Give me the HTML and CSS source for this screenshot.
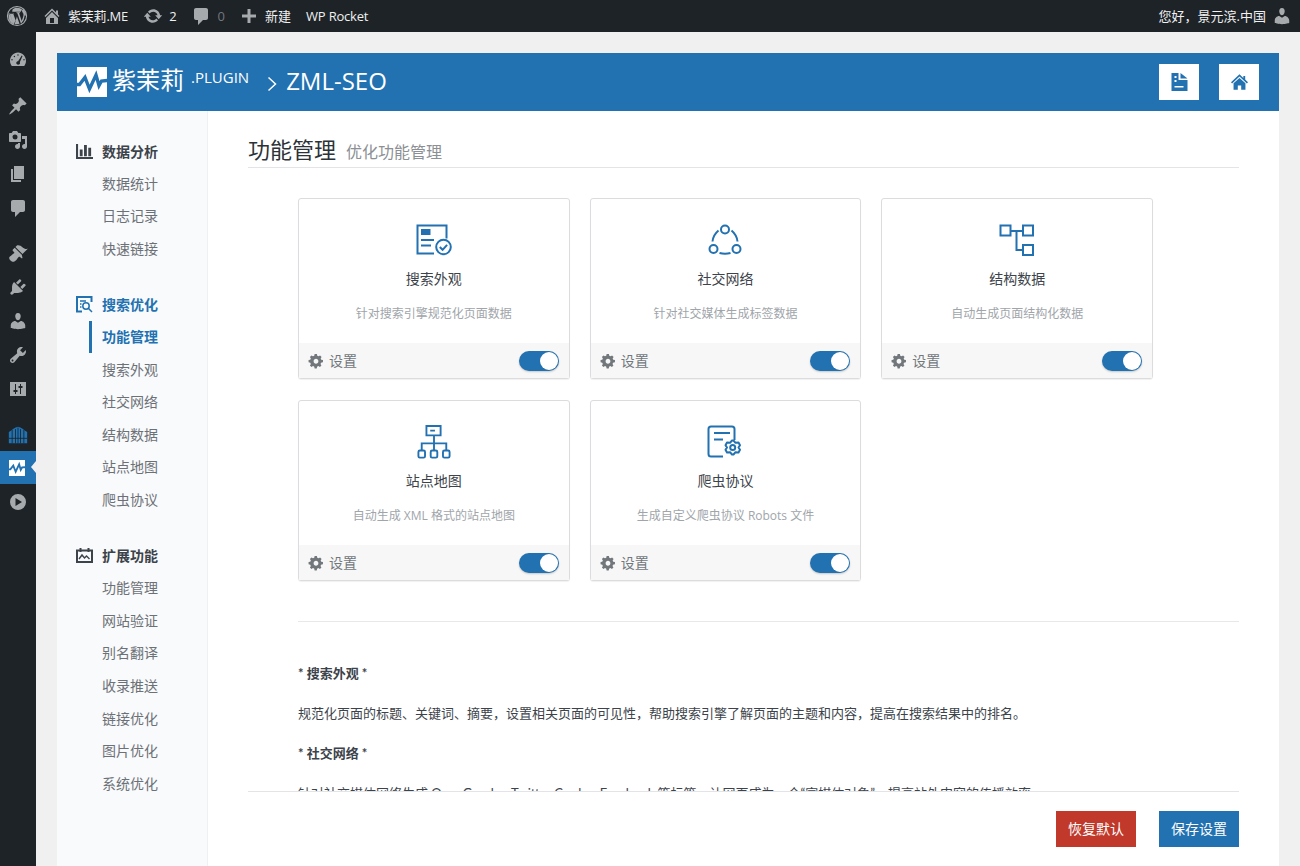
FILE: index.html
```html
<!DOCTYPE html>
<html lang="zh-CN">
<head>
<meta charset="utf-8">
<title>ZML-SEO</title>
<link rel="stylesheet" href="styles.css">
</head>
<body>
<svg class="defs" width="0" height="0" aria-hidden="true">
  <symbol id="i-gear" viewBox="0 0 20 20"><path fill-rule="evenodd" d="M18.500 11.700l-2.200.5c-.2.6-.4 1.100-.7 1.600l1.200 1.900-1.900 1.900-1.900-1.200c-.5.300-1 .5-1.600.7l-.5 2.200H8.300l-.5-2.200c-.6-.2-1.100-.4-1.600-.7l-1.900 1.200-1.900-1.900 1.200-1.900c-.3-.5-.5-1-.7-1.600l-2.200-.5V8.900l2.200-.5c.2-.6.4-1.100.7-1.600L2.400 4.900l1.900-1.900 1.900 1.200c.5-.3 1-.5 1.600-.7l.5-2.200h2.800l.5 2.200c.6.200 1.100.4 1.600.7l1.900-1.200 1.900 1.900-1.200 1.900c.3.500.5 1 .7 1.600l2.200.5v2.800zM10 13.300c1.700 0 3-1.300 3-3s-1.300-3-3-3-3 1.300-3 3 1.300 3 3 3z"/></symbol>
  <symbol id="i-comment" viewBox="0 0 20 20"><path d="M5 2h10c1.100 0 2 .9 2 2v8c0 1.100-.9 2-2 2h-3l-5 5v-5H5c-1.100 0-2-.9-2-2V4c0-1.100.9-2 2-2z"/></symbol>
  <symbol id="i-pulse" viewBox="0 0 30 30"><path fill="#fff" d="M0 0h30v30H0z"/><path fill="none" stroke="#2271b1" stroke-width="3.400" d="M-1 17.500h3.500L8 10.500l4.500 11.500L19 8l3 10.500 2.500-4.500 6-.5"/></symbol>
</svg>

<header class="adminbar">
  <svg class="ab-wp" viewBox="0 0 20 20"><path fill-rule="evenodd" d="M10 .8a9.200 9.200 0 1 1 0 18.400A9.200 9.200 0 0 1 10 .8zm0 1a8.200 8.200 0 1 0 0 16.400A8.200 8.200 0 0 0 10 1.800zM3 7.100l3.900 10.500C4.100 16.300 2.300 13.400 2.300 10c0-1 .2-2 .7-2.900zm13.900 2.500c0 1.300-.5 2.800-1 4.200l-2.300 3.300-2.400-7-.9-2.700-.8-.1v-.7h3.300v.7l-.9.1 2.400 7.200 1.200-3.800c.3-.9.400-1.500.4-2 0-.8-.3-1.400-.6-1.800-.4-.6-.7-1-.7-1.600 0-.7.500-1.300 1.200-1.300 1.300 1.500 2.100 3.500 2.100 5.700zM9.900 10.500l2.400 6.600c-.7.3-1.500.4-2.300.4-.7 0-1.400-.1-2.100-.3zM10 2.500c2 0 3.700.7 5.100 2-.9 0-1.600.8-1.600 1.700H5.900L5 6h.9l2.800 7.900-1.700 4-3.200-9.100-.8-.1v-.7h3.300l.8.1C4 4.400 6.800 2.500 10 2.500z"/></svg>
  <svg class="ab-home" viewBox="0 0 20 20"><path fill-rule="evenodd" d="M16 8.500l1.530 1.530-1.060 1.060L10 4.620l-6.470 6.470-1.060-1.060L10 2.500l4 4v-2h2v4zm-6-2.460l6 5.990V18H4v-5.970zM12 17v-5H8v5h4z"/></svg>
  <span class="ab-text ab-site">紫茉莉.ME</span>
  <svg class="ab-update" viewBox="0 0 20 20"><path d="M10.200 3.280c3.530 0 6.430 2.610 6.920 6h2.080l-3.500 4-3.500-4h2.320c-.45-1.970-2.210-3.440-4.320-3.440-1.450 0-2.730.71-3.540 1.780L4.950 5.660C6.230 4.200 8.110 3.280 10.200 3.280zm-.4 13.440c-3.520 0-6.430-2.610-6.920-6H.8l3.500-4c1.170 1.330 2.330 2.670 3.500 4H5.480c.45 1.970 2.210 3.440 4.320 3.440 1.450 0 2.730-.71 3.540-1.780l1.710 1.950c-1.280 1.460-3.150 2.390-5.250 2.390z"/></svg>
  <span class="ab-text ab-count">2</span>
  <svg class="ab-comment"><use href="#i-comment"/></svg>
  <span class="ab-text ab-zero">0</span>
  <svg class="ab-plus" viewBox="0 0 20 20"><path d="M17 8.500v3h-5.500V17h-3v-5.500H3v-3h5.500V3h3v5.500z"/></svg>
  <span class="ab-text ab-new">新建</span>
  <span class="ab-text ab-rocket">WP Rocket</span>
  <span class="ab-text ab-hello">您好，景元滨.中国</span>
  <svg class="ab-user" viewBox="0 0 20 20"><path d="M10 9.250c-2.270 0-2.730-3.440-2.730-3.440C7 4.020 7.820 2 9.970 2c2.160 0 2.980 2.020 2.710 3.810 0 0-.41 3.440-2.680 3.440zm0 2.570L12.720 10c2.390 0 4.520 2.330 4.520 4.530v2.490s-3.650 1.130-7.240 1.130c-3.650 0-7.240-1.130-7.240-1.130v-2.490c0-2.250 1.940-4.480 4.470-4.480z"/></svg>
</header>

<div class="shell">
  <nav class="wpmenu">
    <div class="mi"><svg viewBox="0 0 20 20"><path fill-rule="evenodd" d="M3.760 16h12.480c1.100-1.430 1.760-3.210 1.760-5.140 0-4.640-3.580-8.410-8-8.410s-8 3.770-8 8.410c0 1.930.66 3.710 1.760 5.140zM10 4.260a.72.72 0 1 1 0 1.450.72.72 0 0 1 0-1.450zM6.400 5.700a.72.72 0 1 1 0 1.450.72.72 0 0 1 0-1.450zM4 9a.72.72 0 1 1 0 1.450A.72.72 0 0 1 4 9zm12 0a.72.72 0 1 1 0 1.450A.72.72 0 0 1 16 9zM13.700 5.500l.8.5-2.700 6.300c.4.700.3 1.500-.3 2-.8.700-2.200.6-2.800-.2-.7-.8-.5-2 .4-2.600.3-.2.600-.3 1-.3z"/></svg></div>
    <div class="mi mi-gap"><svg viewBox="0 0 20 20"><path d="M10.440 3.020l1.820-1.820 6.360 6.350-1.830 1.820c-1.050-.68-2.480-.57-3.410.36l-.75.75c-.92.93-1.040 2.350-.35 3.410l-1.830 1.820-2.410-2.410-2.800 2.790c-.42.42-3.380 2.710-3.800 2.290s1.860-3.390 2.280-3.810l2.790-2.790L4.100 9.360l1.830-1.820c1.050.69 2.480.57 3.400-.36l.75-.75c.93-.92 1.050-2.350.36-3.410z"/></svg></div>
    <div class="mi"><svg viewBox="0 0 20 20"><path fill-rule="evenodd" d="M13 11V4c0-.55-.45-1-1-1h-1.670L9 1H5L3.670 3H2c-.55 0-1 .45-1 1v7c0 .55.45 1 1 1h10c.55 0 1-.45 1-1zM7 4.500a2.500 2.500 0 1 1 0 5 2.500 2.500 0 0 1 0-5zM14 6h5v10.500c0 1.380-1.120 2.500-2.500 2.500S14 17.880 14 16.500s1.120-2.500 2.500-2.500c.17 0 .34.020.5.050V9h-3V6zm-4 8.050V13h2v3.500c0 1.380-1.120 2.500-2.500 2.500S7 17.880 7 16.500 8.120 14 9.500 14c.17 0 .34.020.5.050z"/></svg></div>
    <div class="mi"><svg viewBox="0 0 20 20"><path d="M6 15V2h10v13H6zm-1 1h8v2H3V5h2v11z"/></svg></div>
    <div class="mi"><svg><use href="#i-comment"/></svg></div>
    <div class="mi mi-gap2"><svg viewBox="0 0 20 20"><path d="M14.480 11.060L7.410 3.990l1.500-1.500c.5-.56 2.300-.47 3.510.32 1.210.8 1.430 1.280 2.910 2.100 1.180.64 2.450 1.260 4.450.85zm-.71.71L6.700 4.700 4.930 6.470c-.39.39-.39 1.020 0 1.410l1.060 1.060c.39.39.39 1.030 0 1.420-.6.6-1.430 1.110-2.210 1.690-.35.26-.7.53-1.010.84C1.430 13.230.18 15.180 2.490 17.500s4.270 1.070 5.610-.26c.31-.31.58-.66.84-1.010.58-.78 1.090-1.610 1.690-2.210.39-.39 1.020-.39 1.410 0l1.060 1.060c.39.39 1.020.39 1.410 0z"/></svg></div>
    <div class="mi"><svg viewBox="0 0 20 20"><path d="M13.110 4.360L9.870 7.600 8 5.730l3.240-3.240c.35-.34 1.050-.2 1.560.32.52.51.66 1.210.31 1.550zm-8 1.770l.91-1.120 9.010 9.010-1.190.84c-.71.71-2.630 1.160-3.820 1.160H6.140L4.900 17.260c-.59.59-1.540.59-2.120 0-.59-.58-.59-1.530 0-2.120l1.240-1.240v-3.880c0-1.130.4-3.190 1.090-3.890zm7.260 3.970l3.240-3.240c.34-.35 1.040-.21 1.550.31.52.51.66 1.210.31 1.550l-3.240 3.250z"/></svg></div>
    <div class="mi"><svg viewBox="0 0 20 20"><path d="M10 9.250c-2.270 0-2.730-3.440-2.730-3.440C7 4.020 7.820 2 9.970 2c2.160 0 2.980 2.020 2.710 3.810 0 0-.41 3.440-2.680 3.440zm0 2.570L12.720 10c2.390 0 4.520 2.330 4.520 4.530v2.490s-3.650 1.130-7.240 1.130c-3.650 0-7.240-1.130-7.240-1.130v-2.490c0-2.250 1.940-4.480 4.470-4.480z"/></svg></div>
    <div class="mi"><svg viewBox="0 0 20 20"><path d="M16.680 9.770c-1.340 1.340-3.300 1.670-4.950.99l-5.410 6.520c-.99.99-2.590.99-3.580 0s-.99-2.590 0-3.570l6.520-5.420c-.68-1.650-.35-3.610.99-4.950 1.280-1.280 3.120-1.620 4.720-1.060l-2.890 2.890 2.820 2.820 2.860-2.870c.53 1.580.18 3.390-1.080 4.650zM3.810 16.210c.4.39 1.040.39 1.430 0 .4-.4.4-1.040 0-1.430-.39-.4-1.030-.4-1.430 0-.39.39-.39 1.030 0 1.430z"/></svg></div>
    <div class="mi"><svg viewBox="0 0 20 20"><path fill-rule="evenodd" d="M2 3h16v14H2zM7 5v6H5.500v2H7v2h1v-2h1.500v-2H8V5zm5 0v2h-1.500v2H12v6h1V9h1.500V7H13V5z"/></svg></div>
    <div class="mi mi-gap mi-brand"><svg viewBox="0 0 24 20"><path d="M1 6.500C5 3.500 8 1 12 0c4 1 7 3.500 11 6.500V20H1z"/><path class="brand-lines" d="M5 4v16M9 3v17M12 1v19M15 3v17M19 4v16M1 14h22"/></svg></div>
    <div class="mi-active"><svg><use href="#i-pulse"/></svg></div>
    <div class="mi mi-last"><svg viewBox="0 0 20 20"><path fill-rule="evenodd" d="M10 2a8 8 0 1 1 0 16 8 8 0 0 1 0-16zM7.500 6v8l6.500-4z"/></svg></div>
  </nav>

  <div class="content">
    <section class="panel">
      <div class="hero">
        <svg class="hero-logo"><use href="#i-pulse"/></svg>
        <span class="hero-name">紫茉莉</span>
        <span class="hero-plugin">.PLUGIN</span>
        <svg class="hero-chev" viewBox="0 0 10 16"><path d="M1.500 1.500L8.500 8l-7 6.500"/></svg>
        <span class="hero-title">ZML-SEO</span>
        <div class="hero-actions">
          <div class="hero-btn"><svg viewBox="0 0 16 18"><path fill-rule="evenodd" d="M0 0h7v7h9v11H0zM3 3v2h2V3zm0 4v2h2V7zM3 13v1.500h9V13zM9 0l7 5.500H9z"/></svg></div>
          <div class="hero-btn"><svg viewBox="0 0 20 18"><path d="M10 0l4.500 4.200V1.800h2.200v4.400L20 9.300l-1.300 1.400L10 2.600 1.300 10.700 0 9.300z"/><path d="M10 4.200l7 6.400V18h-5v-5H8v5H3v-7.400z"/></svg></div>
        </div>
      </div>

      <div class="body">
        <aside class="side">
          <div class="side-group">
            <div class="side-head"><svg viewBox="0 0 18 16"><path d="M0 0h2.200v13.800H18V16H0zM4 6h3v7H4zM8.500 1h3v12h-3zM13 4h3v9h-3z"/></svg><span>数据分析</span></div>
            <a class="side-item">数据统计</a>
            <a class="side-item">日志记录</a>
            <a class="side-item">快速链接</a>
          </div>
          <div class="side-group">
            <div class="side-head is-blue"><svg class="line" viewBox="0 0 17 17"><path d="M6 15.500H1V1h14.500v5" stroke-width="2"/><circle cx="10" cy="10" r="3.200"/><path d="M12.300 12.300l3.700 3.700M4 5h6M4 8h1.500M4 11h1.500"/></svg><span>搜索优化</span></div>
            <a class="side-item is-current">功能管理</a>
            <a class="side-item">搜索外观</a>
            <a class="side-item">社交网络</a>
            <a class="side-item">结构数据</a>
            <a class="side-item">站点地图</a>
            <a class="side-item">爬虫协议</a>
          </div>
          <div class="side-group">
            <div class="side-head"><svg class="line" viewBox="0 0 17 15"><path d="M1 2.500h15v11.500H1zM4.500 0v4M12.500 0v4" stroke-width="2"/><path d="M3 11l3-4 2.500 3 2-2 3 3" stroke-width="1.400"/></svg><span>扩展功能</span></div>
            <a class="side-item">功能管理</a>
            <a class="side-item">网站验证</a>
            <a class="side-item">别名翻译</a>
            <a class="side-item">收录推送</a>
            <a class="side-item">链接优化</a>
            <a class="side-item">图片优化</a>
            <a class="side-item">系统优化</a>
          </div>
        </aside>

        <main class="main">
          <div class="scroll">
            <h1 class="page-title">功能管理<small>优化功能管理</small></h1>
            <div class="cards">
              <article class="card">
                <div class="card-top">
                  <svg class="card-icon" viewBox="0 0 36 32"><path d="M18 29.500H1.500V1.500h29v13"/><path class="solid" d="M5 5h9.500v6H5z"/><path d="M5 16h13M5 21.500h10"/><circle cx="27.500" cy="23" r="7.300"/><path d="M23.800 23l2.800 2.800 4.500-5"/></svg>
                  <h2>搜索外观</h2>
                  <p>针对搜索引擎规范化页面数据</p>
                </div>
                <div class="card-foot"><svg class="gear"><use href="#i-gear"/></svg><span>设置</span><i class="toggle"></i></div>
              </article>
              <article class="card">
                <div class="card-top">
                  <svg class="card-icon" viewBox="0 0 36 32"><circle cx="18" cy="5.500" r="4"/><circle cx="6.500" cy="25" r="4"/><circle cx="29.500" cy="25" r="4"/><path d="M11.500 6.500C8.500 9 6 12.500 5.500 17.500M24.500 6.500c3 2.500 5.500 6 6 11M12.500 29c3.500 1 7.500 1 11 0"/></svg>
                  <h2>社交网络</h2>
                  <p>针对社交媒体生成标签数据</p>
                </div>
                <div class="card-foot"><svg class="gear"><use href="#i-gear"/></svg><span>设置</span><i class="toggle"></i></div>
              </article>
              <article class="card">
                <div class="card-top">
                  <svg class="card-icon" viewBox="0 0 36 32"><path d="M1.500 1.500h10v10h-10zM24 1.500h10v10H24zM24 21h10v10H24zM11.500 7H24M17.500 7v19H24"/></svg>
                  <h2>结构数据</h2>
                  <p>自动生成页面结构化数据</p>
                </div>
                <div class="card-foot"><svg class="gear"><use href="#i-gear"/></svg><span>设置</span><i class="toggle"></i></div>
              </article>
              <article class="card">
                <div class="card-top">
                  <svg class="card-icon" viewBox="0 0 36 36"><path d="M10 1h15v10H10zM14 6h5M18 11v16M5 27v-7.500h26V27"/><rect x="1.500" y="27" rx="1.500" width="7" height="7.500"/><rect x="14.500" y="27" rx="1.500" width="7" height="7.500"/><rect x="27.500" y="27" rx="1.500" width="7" height="7.500"/></svg>
                  <h2>站点地图</h2>
                  <p>自动生成 XML 格式的站点地图</p>
                </div>
                <div class="card-foot"><svg class="gear"><use href="#i-gear"/></svg><span>设置</span><i class="toggle"></i></div>
              </article>
              <article class="card">
                <div class="card-top">
                  <svg class="card-icon" viewBox="0 0 36 34"><path d="M16 31.500H4c-1.500 0-2.500-1-2.500-2.500V4c0-1.500 1-2.500 2.500-2.500h21c1.500 0 2.500 1 2.500 2.500v11"/><path d="M7 8h16M7 14.500h9"/><path d="M26.500 15.500l2 2.300 3-.3 1.500 2.700-1.500 2.300 1.500 2.300-1.500 2.700-3-.3-2 2.300h-1.500l-2-2.300-3 .3-1.500-2.700 1.500-2.300-1.500-2.300 1.500-2.700 3 .3 2-2.300z" stroke-linejoin="round"/><circle cx="25.700" cy="22.500" r="2.500"/></svg>
                  <h2>爬虫协议</h2>
                  <p>生成自定义爬虫协议 Robots 文件</p>
                </div>
                <div class="card-foot"><svg class="gear"><use href="#i-gear"/></svg><span>设置</span><i class="toggle"></i></div>
              </article>
            </div>
            <hr class="rule">
            <div class="notes">
              <p class="note-head">* 搜索外观 *</p>
              <p>规范化页面的标题、关键词、摘要，设置相关页面的可见性，帮助搜索引擎了解页面的主题和内容，提高在搜索结果中的排名。</p>
              <p class="note-head">* 社交网络 *</p>
              <p>针对社交媒体网络生成 OpenGraph、Twitter Cards、Facebook 等标签，让网页成为一个“富媒体对象”，提高站外内容的传播效率。</p>
            </div>
          </div>
          <div class="actions">
            <button class="btn btn-red">恢复默认</button>
            <button class="btn btn-blue">保存设置</button>
          </div>
        </main>
      </div>
    </section>
  </div>
</div>
</body>
</html>
```
FILE: styles.css
```css
* { box-sizing: border-box; }
html, body { margin: 0; height: 866px; overflow: hidden; }
body {
  background: #f0f0f1;
  color: #3c434a;
  font: 14px/1.4 "Open Sans", "Noto Sans CJK SC", sans-serif;
  display: flex;
  flex-direction: column;
}
.defs { position: absolute; }

/* admin bar */
.adminbar {
  height: 32px;
  flex: none;
  background: #1d2327;
  display: flex;
  align-items: center;
  color: #f0f0f1;
}
.adminbar svg { fill: #a7aaad; flex: none; }
.ab-text { font-size: 13px; line-height: 32px; white-space: nowrap; }
.ab-wp { width: 22px; height: 22px; margin-left: 6px; }
.ab-home { width: 20px; height: 20px; margin-left: 14px; }
.ab-site { margin-left: 6px; letter-spacing: -.2px; }
.ab-update { width: 20px; height: 20px; margin-left: 15px; }
.ab-count { margin-left: 6px; }
.ab-comment { width: 20px; height: 20px; margin-left: 14px; }
.ab-zero { margin-left: 7px; color: #72777c; }
.ab-plus { width: 20px; height: 20px; margin-left: 14px; }
.ab-new { margin-left: 6px; margin-right: 15px; }
.ab-rocket { letter-spacing: -.2px; }
.ab-hello { margin-left: auto; }
.ab-user { width: 20px; height: 20px; margin: 0 8px 0 6px; }

/* wp side menu */
.shell { flex: 1; display: flex; min-height: 0; }
.wpmenu {
  width: 36px;
  flex: none;
  background: #1d2327;
  padding-top: 11px;
}
.mi, .mi-active {
  height: 34px;
  display: flex;
  align-items: center;
  justify-content: center;
}
.mi svg { width: 20px; height: 20px; fill: #a7aaad; }
.mi-gap { margin-top: 12px; }
.mi-gap2 { margin-top: 11px; }
.mi-last { margin-top: 1px; }
.mi-brand { height: 33px; }
.mi-brand svg { width: 20px; height: 20px; fill: #2271b1; }
.brand-lines { fill: none; stroke: #1d2327; stroke-width: 1; }
.mi-active {
  height: 33px;
  background: #2271b1;
  position: relative;
}
.mi-active svg { width: 16px; height: 16px; margin-right: 2px; }
.mi-active::after {
  content: "";
  position: absolute;
  right: 0;
  top: 10px;
  border: 6px solid transparent;
  border-left-width: 0;
  border-right-color: #f0f0f1;
  border-right-width: 5px;
}

/* panel */
.content { flex: 1; min-width: 0; padding: 21px 21px 0; }
.panel { height: 100%; display: flex; flex-direction: column; background: #fff; }
.hero {
  height: 58px;
  flex: none;
  background: #2271b1;
  display: flex;
  align-items: center;
  padding: 0 20px;
  color: #fff;
}
.hero-logo { width: 30px; height: 30px; flex: none; margin-top: -1px; }
.hero-name { font-size: 24px; margin-left: 5px; margin-top: -4px; line-height: 1; }
.hero-plugin { font-size: 15px; font-weight: 500; margin-left: 7px; margin-top: -9px; }
.hero-chev { width: 10px; height: 16px; margin-left: 18px; margin-top: 3px; fill: none; stroke: #fff; stroke-width: 1.500; }
.hero-title { font-size: 24px; margin-left: 9px; margin-top: -2px; line-height: 1; }
.hero-actions { margin-left: auto; display: flex; gap: 20px; }
.hero-btn {
  width: 40px;
  height: 36px;
  background: #fff;
  display: flex;
  align-items: center;
  justify-content: center;
}
.hero-btn svg { width: 17px; height: 18px; fill: #2271b1; }

.body { flex: 1; display: flex; min-height: 0; }

/* plugin sidebar */
.side {
  width: 151px;
  flex: none;
  background: #f9fafb;
  border-right: 1px solid #eef0f2;
  padding-top: 24px;
}
.side-group { margin-bottom: 23px; }
.side-head {
  height: 32.600px;
  padding-left: 19px;
  display: flex;
  align-items: center;
  font-weight: 700;
  color: #3c434a;
}
.side-head svg { width: 17px; height: 17px; margin-right: 9px; fill: currentColor; flex: none; }
.side-head svg.line { fill: none; stroke: currentColor; stroke-width: 1.500; }
.side-head.is-blue { color: #2271b1; }
.side-item {
  display: block;
  height: 32.600px;
  line-height: 32.600px;
  padding-left: 45px;
  color: #6c7178;
  position: relative;
}
.side-item.is-current { color: #2271b1; font-weight: 700; }
.side-item.is-current::before {
  content: "";
  position: absolute;
  left: 32px;
  top: 0;
  bottom: 1px;
  width: 3px;
  background: #2271b1;
}

/* main */
.main { flex: 1; min-width: 0; display: flex; flex-direction: column; padding: 0 40px; }
.scroll { height: 680px; flex: none; overflow: hidden; }
.page-title {
  margin: 0;
  height: 57px;
  padding-top: 22px;
  border-bottom: 1px solid #e2e4e7;
  font-size: 22px;
  font-weight: 400;
  line-height: 32px;
  color: #2c3338;
}
.page-title small { font-size: 16px; color: #8c8f94; margin-left: 10px; }
.cards {
  margin: 30px 0 0 50px;
  width: 855px;
  display: grid;
  grid-template-columns: repeat(3, 1fr);
  gap: 21px 20px;
}
.card {
  height: 181px;
  background: #fff;
  border: 1px solid #dcdcde;
  border-radius: 3px;
  box-shadow: 0 1px 1px rgba(0, 0, 0, .06);
  display: flex;
  flex-direction: column;
}
.card-top { flex: 1; text-align: center; padding-top: 24px; }
.card-icon {
  display: block;
  width: 36px;
  height: 34px;
  margin: 0 auto;
  fill: none;
  stroke: #2271b1;
  stroke-width: 2;
}
.card-icon .solid { fill: #2271b1; stroke: none; }
.card h2 { margin: 11px 0 0; font-size: 14px; font-weight: 400; line-height: 22px; color: #3c434a; }
.card-top p { margin: 14px 0 0; font-size: 12px; line-height: 20px; color: #a0a5aa; }
.card-foot {
  height: 35px;
  flex: none;
  background: #f7f7f7;
  display: flex;
  align-items: center;
  padding: 0 10px 0 9px;
  color: #72777c;
  font-size: 14px;
}
.gear { width: 16px; height: 16px; fill: #72777c; margin-right: 5px; }
.toggle {
  margin-left: auto;
  width: 40px;
  height: 20px;
  border-radius: 10px;
  background: #2271b1;
  position: relative;
  box-shadow: 0 1px 2px rgba(0, 0, 0, .2);
}
.toggle::after {
  content: "";
  position: absolute;
  right: 1px;
  top: 1px;
  width: 18px;
  height: 18px;
  border-radius: 50%;
  background: #fff;
}
.rule { margin: 40px 0 0 50px; border: 0; border-top: 1px solid #e8e8ea; }
.notes {
  margin-left: 50px;
  padding-top: 40.500px;
  font-family: "Lato", "Noto Sans CJK SC", sans-serif;
  font-size: 13px;
  line-height: 20px;
  color: #3c434a;
}
.notes p { margin: 0 0 20px; }
.notes .note-head { font-weight: 700; }

.actions {
  flex: 1;
  border-top: 1px solid #e2e4e7;
  display: flex;
  justify-content: flex-end;
  align-items: flex-start;
  gap: 23px;
  padding-top: 19px;
}
.btn {
  width: 80px;
  height: 36px;
  border: 0;
  color: #fff;
  font: 14px/36px "Open Sans", "Noto Sans CJK SC", sans-serif;
  padding: 0;
}
.btn-red { background: #c0392b; }
.btn-blue { background: #2271b1; }
```
